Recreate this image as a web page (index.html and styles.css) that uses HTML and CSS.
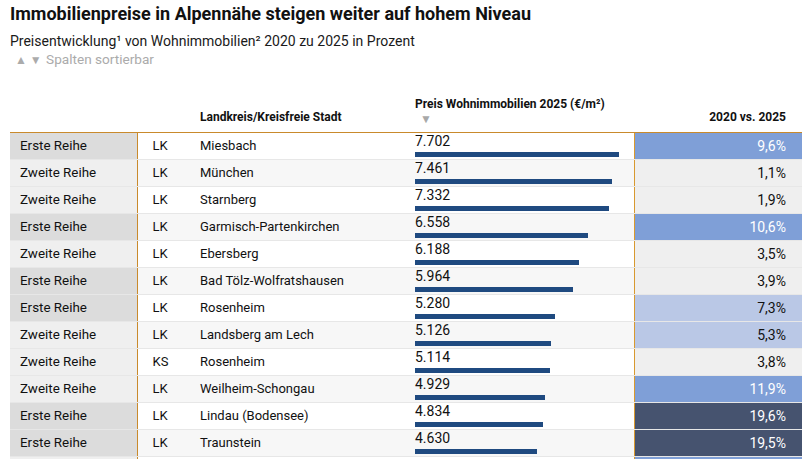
FILE: index.html
```html
<!DOCTYPE html>
<html lang="de">
<head>
<meta charset="utf-8">
<title>Immobilienpreise in Alpennähe</title>
<link rel="stylesheet" href="styles.css">
</head>
<body>
<div class="page">
  <header class="intro">
    <h1 class="title">Immobilienpreise in Alpennähe steigen weiter auf hohem Niveau</h1>
    <p class="subtitle">Preisentwicklung¹ von Wohnimmobilien² 2020 zu 2025 in Prozent</p>
    <p class="sort-hint"><span class="arrows">▲ ▼</span> Spalten sortierbar</p>
  </header>
  <table class="data">
    <colgroup>
      <col class="c-cat"><col class="c-type"><col class="c-name"><col class="c-price"><col class="c-change">
    </colgroup>
    <thead>
      <tr>
        <th class="h-cat"></th>
        <th class="h-type"></th>
        <th class="h-name">Landkreis/Kreisfreie Stadt</th>
        <th class="h-price"><div class="h-label">Preis Wohnimmobilien 2025 (€/m²)</div><div class="h-arrow">▼</div></th>
        <th class="h-change">2020 vs. 2025</th>
      </tr>
    </thead>
    <tbody>
      <tr><td class="cat first">Erste Reihe</td><td class="type">LK</td><td class="name">Miesbach</td><td class="price"><div class="num">7.702</div><div class="bar" style="width:203.6px"></div></td><td class="change high">9,6%</td></tr>
      <tr><td class="cat second">Zweite Reihe</td><td class="type">LK</td><td class="name">München</td><td class="price"><div class="num">7.461</div><div class="bar" style="width:197.2px"></div></td><td class="change low">1,1%</td></tr>
      <tr><td class="cat second">Zweite Reihe</td><td class="type">LK</td><td class="name">Starnberg</td><td class="price"><div class="num">7.332</div><div class="bar" style="width:193.8px"></div></td><td class="change low">1,9%</td></tr>
      <tr><td class="cat first">Erste Reihe</td><td class="type">LK</td><td class="name">Garmisch-Partenkirchen</td><td class="price"><div class="num">6.558</div><div class="bar" style="width:173.3px"></div></td><td class="change high">10,6%</td></tr>
      <tr><td class="cat second">Zweite Reihe</td><td class="type">LK</td><td class="name">Ebersberg</td><td class="price"><div class="num">6.188</div><div class="bar" style="width:163.6px"></div></td><td class="change low">3,5%</td></tr>
      <tr><td class="cat first">Erste Reihe</td><td class="type">LK</td><td class="name">Bad Tölz-Wolfratshausen</td><td class="price"><div class="num">5.964</div><div class="bar" style="width:157.6px"></div></td><td class="change low">3,9%</td></tr>
      <tr><td class="cat first">Erste Reihe</td><td class="type">LK</td><td class="name">Rosenheim</td><td class="price"><div class="num">5.280</div><div class="bar" style="width:139.6px"></div></td><td class="change mid">7,3%</td></tr>
      <tr><td class="cat second">Zweite Reihe</td><td class="type">LK</td><td class="name">Landsberg am Lech</td><td class="price"><div class="num">5.126</div><div class="bar" style="width:135.5px"></div></td><td class="change mid">5,3%</td></tr>
      <tr><td class="cat second">Zweite Reihe</td><td class="type">KS</td><td class="name">Rosenheim</td><td class="price"><div class="num">5.114</div><div class="bar" style="width:135.2px"></div></td><td class="change low">3,8%</td></tr>
      <tr><td class="cat second">Zweite Reihe</td><td class="type">LK</td><td class="name">Weilheim-Schongau</td><td class="price"><div class="num">4.929</div><div class="bar" style="width:130.3px"></div></td><td class="change high">11,9%</td></tr>
      <tr><td class="cat first">Erste Reihe</td><td class="type">LK</td><td class="name">Lindau (Bodensee)</td><td class="price"><div class="num">4.834</div><div class="bar" style="width:127.8px"></div></td><td class="change top">19,6%</td></tr>
      <tr><td class="cat first">Erste Reihe</td><td class="type">LK</td><td class="name">Traunstein</td><td class="price"><div class="num">4.630</div><div class="bar" style="width:122.4px"></div></td><td class="change top">19,5%</td></tr>
      <tr><td class="cat second">Zweite Reihe</td><td class="type">LK</td><td class="name">Berchtesgadener Land</td><td class="price"><div class="num">4.436</div><div class="bar" style="width:117.3px"></div></td><td class="change high">12,4%</td></tr>
    </tbody>
  </table>
</div>
</body>
</html>
```
FILE: styles.css
```css
html, body {
  margin: 0;
  padding: 0;
  background: #ffffff;
}
body {
  font-family: Roboto, "Liberation Sans", Arial, sans-serif;
  color: #111111;
}
.page {
  padding: 3px 10px 0 10px;
}
.intro {
  display: flex;
  flex-direction: column;
}
.title {
  margin: 0;
  font-size: 18px;
  line-height: 21px;
  font-weight: 700;
  color: #111111;
}
.subtitle {
  margin: 9px 0 0 0;
  font-size: 14px;
  line-height: 16px;
  color: #1a1a1a;
}
.sort-hint {
  margin: 3px 0 0 5px;
  font-size: 13.6px;
  line-height: 15px;
  color: #ababab;
}
.sort-hint .arrows {
  font-size: 12px;
  letter-spacing: 0;
  margin-right: 1px;
}
.data {
  width: 792px;
  border-collapse: collapse;
  table-layout: fixed;
}
.c-cat { width: 127px; }
.c-type { width: 53px; }
.c-name { width: 220px; }
.c-price { width: 224px; }
.c-change { width: 168px; }

.data th {
  font-size: 12px;
  line-height: 16px;
  font-weight: 700;
  color: #111111;
  text-align: left;
  vertical-align: bottom;
  padding: 0 0 7px 0;
  border-bottom: 1px solid #c98a2c;
}
.data th.h-name { padding-left: 10px; }
.data th.h-price {
  padding: 28px 0 8px 5px;
}
.h-arrow {
  font-size: 12px;
  line-height: 10px;
  margin: 2px 0 0 5px;
  color: #a8a8a8;
  font-weight: 400;
}
.data th.h-change {
  text-align: right;
  padding-right: 16px;
}

.data td {
  height: 26px;
  padding: 0;
  font-size: 13px;
  line-height: 16px;
  vertical-align: middle;
  border-bottom: 1px solid #e7e7e7;
}
.data tbody tr:nth-child(even) td {
  background: #f7f7f7;
}
.data td.cat {
  padding-left: 10px;
  font-size: 13.4px;
  border-right: 1px solid #c98a2c;
}
.data tbody tr td.cat.first { background: #dcdcdc; }
.data tbody tr td.cat.second { background: #efefef; }
.data td.type { padding-left: 15px; }
.data td.name { padding-left: 10px; }
.data td.price {
  vertical-align: top;
  padding-left: 5px;
}
.num {
  font-size: 14px;
  line-height: 17px;
  color: #111111;
}
.bar {
  height: 5px;
  margin-top: 2px;
  background: #1f4a80;
}
.data td.change {
  text-align: right;
  padding-right: 16px;
  font-size: 14px;
  border-left: 1px solid #d8992f;
}
.data tbody tr td.change.low { background: #efefef; color: #111111; }
.data tbody tr td.change.mid { background: #bac8e6; color: #111111; }
.data tbody tr td.change.high { background: #7f9fd7; color: #ffffff; }
.data tbody tr td.change.top { background: #46536f; color: #ffffff; }
```
